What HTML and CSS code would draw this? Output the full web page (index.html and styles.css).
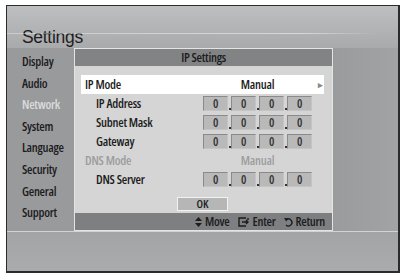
FILE: index.html
```html
<!DOCTYPE html>
<html lang="en">
<head>
    <meta charset="UTF-8">
    <title>Settings - IP Settings</title>
    <link rel="stylesheet" href="styles.css">
</head>
<body>

<div class="screen">
    <div class="top"><h1>Settings</h1></div>

    <div class="middle">
        <ul class="menu">
            <li>Display</li>
            <li>Audio</li>
            <li class="cur">Network</li>
            <li>System</li>
            <li>Language</li>
            <li>Security</li>
            <li>General</li>
            <li>Support</li>
        </ul>

        <div class="dialog">
            <div class="dlg-title">IP Settings</div>
            <div class="dlg-body">
                <div class="row sel"><span class="lbl">IP Mode</span><span class="val">Manual</span><span class="arrow">&#9656;</span></div>
                <div class="row"><span class="lbl sub">IP Address</span><span class="val ip"><b>0</b><i></i><b>0</b><i></i><b>0</b><i></i><b>0</b></span></div>
                <div class="row"><span class="lbl sub">Subnet Mask</span><span class="val ip"><b>0</b><i></i><b>0</b><i></i><b>0</b><i></i><b>0</b></span></div>
                <div class="row"><span class="lbl sub">Gateway</span><span class="val ip"><b>0</b><i></i><b>0</b><i></i><b>0</b><i></i><b>0</b></span></div>
                <div class="row dim"><span class="lbl">DNS Mode</span><span class="val">Manual</span></div>
                <div class="row"><span class="lbl sub">DNS Server</span><span class="val ip"><b>0</b><i></i><b>0</b><i></i><b>0</b><i></i><b>0</b></span></div>
                <div class="ok">OK</div>
            </div>
            <div class="dlg-foot">
                <span class="hint">
                    <svg width="7" height="10" viewBox="0 0 7 10"><path d="M3.5 0 L7 4 L0 4 Z M0 6 L7 6 L3.5 10 Z" fill="#1c1c1c"/></svg>
                    Move
                </span>
                <span class="hint">
                    <svg width="12" height="10" viewBox="0 0 12 10"><path d="M8 1 H1 V9 H8 M4 5 H10 M8 3 L10 5 L8 7 M10 1 V3" fill="none" stroke="#1c1c1c" stroke-width="1.4"/></svg>
                    Enter
                </span>
                <span class="hint">
                    <svg width="9" height="10" viewBox="0 0 9 10"><path d="M2.5 2.5 A3.5 3.5 0 1 1 2 8" fill="none" stroke="#1c1c1c" stroke-width="1.4"/><path d="M0 1 L4.5 1.2 L2.2 4.6 Z" fill="#1c1c1c"/></svg>
                    Return
                </span>
            </div>
        </div>

        <div class="side"></div>
    </div>

    <div class="bottom"></div>
</div>

</body>
</html>
```

FILE: styles.css
```css
body{margin:0;background:#fff;font-family:"Open Sans","Liberation Sans",sans-serif;font-stretch:75%;color:#1c1c1c;}
.screen{margin:5px 0 0 6px;width:391px;height:265px;border:1px solid #2b2b2b;border-width:1px 2px 2px 1px;display:flex;flex-direction:column;background:#a6a7a9;}

.top{height:42px;background:linear-gradient(#bebfc1,#a9aaac);position:relative;}
.top h1{margin:0;padding:20px 0 0 15px;font-family:"Liberation Sans",Arial,sans-serif;font-stretch:normal;font-weight:normal;font-size:17.5px;letter-spacing:-0.3px;line-height:22px;color:#1e1e1e;}
.top::after{content:"";position:absolute;left:0;top:27px;width:370px;height:1px;background:linear-gradient(90deg,rgba(255,255,255,0.35),rgba(255,255,255,0.5) 80%,rgba(255,255,255,0));}

.middle{height:183px;display:flex;background:#999a9c;}
.menu{list-style:none;margin:0;padding:3px 0 0 15px;width:52px;font-size:12.5px;font-weight:600;letter-spacing:-0.25px;}
.menu li{line-height:21.6px;white-space:nowrap;}
.menu li.cur{color:#dcdcdc;}

.dialog{width:257px;border:1px solid #e4e4e4;display:flex;flex-direction:column;background:#d5d5d5;}
.dlg-title{height:17px;line-height:17px;text-align:center;background:#828385;font-size:12.5px;font-weight:600;letter-spacing:-0.25px;}
.dlg-body{flex:1;padding:9px 8px 0 6px;}
.row{height:19px;display:flex;align-items:center;font-size:12.5px;font-weight:600;letter-spacing:-0.25px;}
.row.sel{background:#fff;}
.lbl{width:118px;padding-left:4px;white-space:nowrap;}
.lbl.sub{width:107px;padding-left:15px;}
.val{width:109px;text-align:center;}
.arrow{margin-left:6px;font-size:9px;color:#8a8a8a;}
.row.dim{color:#9d9d9d;}
.ip{display:flex;align-items:flex-end;}
.ip b{width:23px;height:13px;border:1px solid #8c8c8c;border-color:#8a8a8a #c4c4c4 #c4c4c4 #8a8a8a;background:#b9b9b9;line-height:13px;font-size:12px;font-weight:600;color:#303030;text-align:center;}
.ip i{width:3px;height:2px;margin-bottom:1px;display:flex;justify-content:center;}
.ip i::before{content:"";width:2px;height:2px;background:#333;}

.ok{margin:8px 0 0 96px;width:49px;height:12px;border:1px solid #f2f2f2;background:#b6b6b6;font-size:11.5px;font-weight:600;line-height:12px;text-align:center;}

.dlg-foot{height:17px;background:#7e7f81;display:flex;justify-content:flex-end;align-items:center;gap:8px;padding-right:7px;font-size:12.5px;font-weight:600;letter-spacing:-0.25px;}
.hint{display:flex;align-items:center;gap:3px;}

.side{flex:1;background:linear-gradient(90deg,#9a9b9d,#a2a3a5);}
.bottom{flex:1;border-top:1px solid #d2d3d4;background:linear-gradient(#a3a4a6,#aaabad);}
```
